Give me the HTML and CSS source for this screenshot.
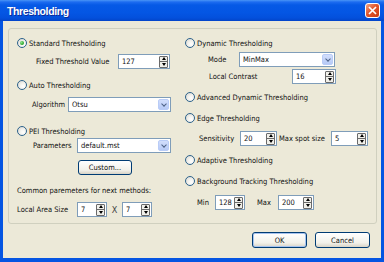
FILE: index.html
```html
<!DOCTYPE html>
<html lang="en">
<head>
    <meta charset="UTF-8">
    <title>Thresholding</title>
    <link rel="stylesheet" href="styles.css">
</head>
<body>
    <div class="window">
        <div class="titlebar">
            <span class="title">Thresholding</span>
            <span class="close">
                <svg width="9" height="9" viewBox="0 0 9 9"><path d="M1 1 L8 8 M8 1 L1 8" stroke="#fff" stroke-width="1.7"/></svg>
            </span>
        </div>

        <div class="client">
            <div class="group">
                <!-- left column -->
                <div class="col col-left">
                    <div class="row opt m7"><span class="radio on"></span>Standard Thresholding</div>
                    <div class="row m4 pl27">
                        <span class="lbl w82">Fixed Threshold Value</span>
                        <div class="field w52"><span class="val">127</span><span class="spin"><i class="up"></i><i class="down"></i></span></div>
                    </div>
                    <div class="row opt m9"><span class="radio"></span>Auto Thresholding</div>
                    <div class="row m5 pl23">
                        <span class="lbl w36">Algorithm</span>
                        <div class="field combo w103"><span class="val">Otsu</span><span class="drop"></span></div>
                    </div>
                    <div class="row opt m12"><span class="radio"></span>PEI Thresholding</div>
                    <div class="row m0 pl24">
                        <span class="lbl w44">Parameters</span>
                        <div class="field combo w94"><span class="val">default.mst</span><span class="drop"></span></div>
                    </div>
                    <div class="row m7 pl69">
                        <span class="btn w54">Custom...</span>
                    </div>
                    <div class="row opt m8">Common paremeters for next methods:</div>
                    <div class="row m5 pl8">
                        <span class="lbl w60">Local Area Size</span>
                        <div class="field w30"><span class="val">7</span><span class="spin"><i class="up"></i><i class="down"></i></span></div>
                        <span class="lbl w15 times">X</span>
                        <div class="field w30"><span class="val">7</span><span class="spin"><i class="up"></i><i class="down"></i></span></div>
                    </div>
                </div>

                <!-- right column -->
                <div class="col col-right">
                    <div class="row opt m7"><span class="radio"></span>Dynamic Thresholding</div>
                    <div class="row m2 pl23">
                        <span class="lbl w31">Mode</span>
                        <div class="field combo w96"><span class="val">MinMax</span><span class="drop"></span></div>
                    </div>
                    <div class="row m2 pl24">
                        <span class="lbl w83">Local Contrast</span>
                        <div class="field w44"><span class="val">16</span><span class="spin"><i class="up"></i><i class="down"></i></span></div>
                    </div>
                    <div class="row opt m6"><span class="radio"></span>Advanced Dynamic Thresholding</div>
                    <div class="row opt m7"><span class="radio"></span>Edge Thresholding</div>
                    <div class="row m6 pl14">
                        <span class="lbl w41">Sensitivity</span>
                        <div class="field w37"><span class="val">20</span><span class="spin"><i class="up"></i><i class="down"></i></span></div>
                        <span class="lbl w54 pad2">Max spot size</span>
                        <div class="field w37"><span class="val">5</span><span class="spin"><i class="up"></i><i class="down"></i></span></div>
                    </div>
                    <div class="row opt m7"><span class="radio"></span>Adaptive Thresholding</div>
                    <div class="row opt m7"><span class="radio"></span>Background Tracking Thresholding</div>
                    <div class="row m7 pl12">
                        <span class="lbl w18">Min</span>
                        <div class="field w30"><span class="val">128</span><span class="spin"><i class="up"></i><i class="down"></i></span></div>
                        <span class="lbl w33 pad12">Max</span>
                        <div class="field w36"><span class="val">200</span><span class="spin"><i class="up"></i><i class="down"></i></span></div>
                    </div>
                </div>
            </div>

            <div class="actions">
                <span class="btn btn-default w55">OK</span>
                <span class="btn w55">Cancel</span>
            </div>
        </div>
    </div>
</body>
</html>
```

FILE: styles.css
```css
body {
    margin: 0;
    font-family: "DejaVu Sans Condensed", "Liberation Sans", Arial, sans-serif;
    font-size: 7.5px;
    color: #111;
}

.window {
    width: 384px;
    height: 262px;
    display: flex;
    flex-direction: column;
    background: #0555e2;
}

.titlebar {
    height: 21px;
    flex: none;
    display: flex;
    align-items: center;
    padding: 0 4px 0 7px;
    background: linear-gradient(#4a95f6 0, #1d6cf0 2px, #0659e6 5px, #0456e4 60%, #0350dc 85%, #0345c9 100%);
}

.title {
    flex: 1;
    color: #fff;
    font-family: "Liberation Sans", Arial, sans-serif;
    font-weight: bold;
    font-size: 10.5px;
    letter-spacing: -0.4px;
    text-shadow: 1px 1px #0b2b9a;
}

.close {
    width: 15px;
    height: 15px;
    box-sizing: border-box;
    border: 1px solid #fff;
    border-radius: 3px;
    background: linear-gradient(135deg, #f0a487 0, #e2562c 45%, #c93a10 100%);
    display: flex;
    align-items: center;
    justify-content: center;
}

.client {
    flex: 1;
    margin: 0 3px 4px;
    padding: 7px 4px 0 5px;
    background: #ece9d8;
    display: flex;
    flex-direction: column;
}

.group {
    height: 196px;
    box-sizing: border-box;
    border: 1px solid #d0d0bf;
    border-radius: 3px;
    display: grid;
    grid-template-columns: 176px 1fr;
}

.col {
    display: flex;
    flex-direction: column;
}

.col-left {
    padding-right: 14px;
}

.row {
    height: 15px;
    display: flex;
    align-items: center;
    white-space: nowrap;
}

.row.opt {
    height: 14px;
}

.col-left .opt {
    padding-left: 8px;
}

/* row spacing */
.m0 { margin-top: 0; }
.m2 { margin-top: 2px; }
.m4 { margin-top: 4px; }
.m5 { margin-top: 5px; }
.m6 { margin-top: 6px; }
.m7 { margin-top: 7px; }
.m8 { margin-top: 8px; }
.m9 { margin-top: 9px; }
.m12 { margin-top: 12px; }

.pl8 { padding-left: 8px; }
.pl12 { padding-left: 12px; }
.pl14 { padding-left: 14px; }
.pl23 { padding-left: 23px; }
.pl24 { padding-left: 24px; }
.pl27 { padding-left: 27px; }
.pl69 { padding-left: 69px; }

.lbl {
    flex: none;
    box-sizing: border-box;
}

.pad2 { padding-left: 2px; }
.pad12 { padding-left: 12px; }
.times { text-align: center; font-size: 9px; color: #444; }

.w15 { width: 15px; }
.w18 { width: 18px; }
.w30 { width: 30px; }
.w31 { width: 31px; }
.w33 { width: 33px; }
.w36 { width: 36px; }
.w37 { width: 37px; }
.w41 { width: 41px; }
.w44 { width: 44px; }
.w52 { width: 52px; }
.w54 { width: 54px; }
.w55 { width: 55px; }
.w60 { width: 60px; }
.w82 { width: 82px; }
.w83 { width: 83px; }
.w94 { width: 94px; }
.w96 { width: 96px; }
.w103 { width: 103px; }

.radio {
    width: 10px;
    height: 10px;
    box-sizing: border-box;
    border: 1px solid #2c628b;
    border-radius: 50%;
    margin-right: 2px;
    flex: none;
    background: radial-gradient(circle at 65% 65%, #fff 0, #f3f2ee 40%, #d4d3cb 100%);
    display: flex;
    align-items: center;
    justify-content: center;
}

.radio.on::before {
    content: '';
    width: 4px;
    height: 4px;
    border-radius: 50%;
    background: radial-gradient(circle at 35% 35%, #8fe28f, #21a121 70%);
}

.field {
    height: 15px;
    box-sizing: border-box;
    border: 1px solid #7f9db9;
    background: #fff;
    display: flex;
    align-items: center;
    flex: none;
}

.val {
    flex: 1;
    min-width: 0;
    padding-left: 3px;
}

.spin {
    width: 9px;
    height: 12px;
    box-sizing: border-box;
    margin-right: 1px;
    flex: none;
    border: 1px solid #6a6a6a;
    border-radius: 1px;
    background: #f1f0ea;
    display: flex;
    flex-direction: column;
}

.spin i {
    flex: 1;
    display: flex;
    align-items: center;
    justify-content: center;
}

.spin i + i {
    border-top: 1px solid #6a6a6a;
}

.spin .up::before {
    content: '';
    border-left: 2.5px solid transparent;
    border-right: 2.5px solid transparent;
    border-bottom: 3px solid #000;
}

.spin .down::before {
    content: '';
    border-left: 2.5px solid transparent;
    border-right: 2.5px solid transparent;
    border-top: 3px solid #000;
}

.drop {
    width: 11px;
    height: 11px;
    margin-right: 1px;
    flex: none;
    border-radius: 2px;
    background: linear-gradient(#d2defc, #b7caf6);
    border: 1px solid #b9ccf7;
    box-sizing: border-box;
    position: relative;
}

.drop::before {
    content: '';
    position: absolute;
    left: 2.5px;
    top: 1.5px;
    width: 3px;
    height: 3px;
    border-right: 1.5px solid #4d6185;
    border-bottom: 1.5px solid #4d6185;
    transform: rotate(45deg);
}

.btn {
    height: 15px;
    box-sizing: border-box;
    border: 1px solid #003c74;
    border-radius: 3px;
    background: linear-gradient(#ffffff, #f2f1ea 70%, #d8d3c6);
    display: flex;
    align-items: center;
    justify-content: center;
    flex: none;
}

.btn-default {
    box-shadow: inset 0 0 0 1px #a6c3ef;
}

.actions {
    display: flex;
    justify-content: flex-end;
    gap: 8px;
    margin-top: 8px;
    padding-right: 7px;
}

.actions .btn {
    height: 16px;
}
```
